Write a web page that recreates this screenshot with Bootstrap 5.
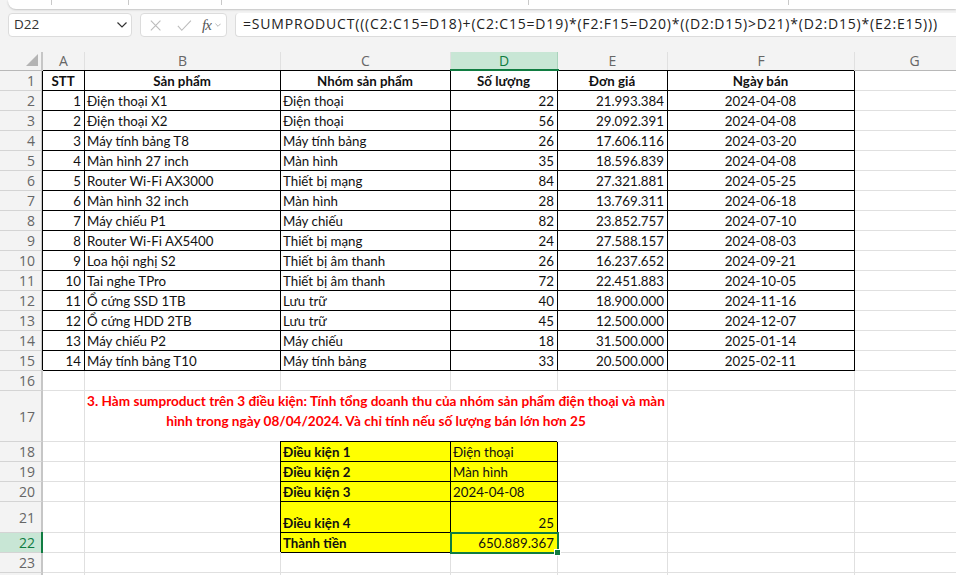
<!doctype html>
<html lang="vi"><head><meta charset="utf-8"><title>Excel</title>
<link href="https://cdn.jsdelivr.net/npm/bootstrap@5.3.0/dist/css/bootstrap.min.css" rel="stylesheet">
<style>
html,body{height:575px;overflow:hidden;background:#f3f3f3}
body{font-family:"Open Sans","Noto Sans",sans-serif}
.rib{height:9px;margin-left:8px;background:#fff;border-bottom-left-radius:8px;box-shadow:0 1px 2px #c4c4c4}
.rib i{display:block;height:5px;border-right:1px solid #c9c9c9}
.fbar{height:43px;padding-top:4px}
.namebox,.fnbox,.fxbox{height:24px;background:#fff;border:1px solid #dcdcdc}
.namebox{width:124px;margin-left:8px;border-radius:4px;padding:0 4px 1px 5px;font-size:13.5px;color:#333}
.fnbox{width:87px;margin-left:8px;border-radius:4px;padding:0 5px}
.fnbox em{font:italic 15px "Liberation Serif",serif;color:#555;letter-spacing:-1px;margin-left:10px}
.fxbox{flex:1;margin-left:8px;border-right:0;border-top:0;border-top-left-radius:4px;border-bottom-left-radius:4px;padding:0 0 2px 7px;font:14px "Open Sans",sans-serif;letter-spacing:.81px;color:#222;white-space:nowrap;overflow:hidden}
.sheetwrap{overflow:hidden;height:523px;margin-top:0}
.xl{table-layout:fixed;width:975px;border-collapse:separate;border-spacing:0;background:#fff;font:13.3px/18px Lato,"Open Sans",sans-serif;color:#111}
.xl td{height:20px;padding:0 3px 0 2px;vertical-align:bottom;white-space:nowrap;overflow:visible;border-right:1px solid #e0e0e0;border-bottom:1px solid #e0e0e0}
.xl thead th{height:19px;background:#f3f3f3;color:#666;font:400 14px/18px "Open Sans",sans-serif;text-align:center;border-right:1px solid #e0e0e0;border-bottom:1px solid #b8b8b8;padding:0;vertical-align:bottom}
.xl tbody th{background:#f3f3f3;color:#666;font:400 14px/19px "Open Sans",sans-serif;text-align:right;padding:0 6px 0 0;border-right:2px solid #c6c6c6;border-bottom:1px solid #d4d4d4;vertical-align:middle}
.xl td.kk{border-right-color:#000;border-bottom-color:#000;box-shadow:-1px -1px 0 #000}
.xl td.yy{background:#ff0}
.xl thead th.corner{position:relative;border-right:2px solid #c6c6c6}
.corner svg{position:absolute;right:3px;bottom:4px}
.corner::before{content:"";position:absolute;right:-2px;top:-11px;height:11px;width:2px;background:#c6c6c6}
.xl thead th.hicol{background:#c8e6d5;color:#107c41;position:relative;z-index:2;border-right-color:#a9d3bc}
.hicol::after{content:"";position:absolute;left:-1px;right:-2px;bottom:-1px;height:2px;background:#107c41}
.xl tbody th.hirow{background:#c8e6d5;color:#107c41;position:relative;z-index:2;border-right-color:#c8e6d5}
.hirow::after{content:"";position:absolute;right:-2px;top:-1px;bottom:-1px;width:2px;background:#107c41}
.r17 td{height:51px;vertical-align:middle}
.r21 td{height:31px}
.xl td.title{white-space:normal;text-align:center;color:#f00;font-weight:700;font-size:13.6px;line-height:20px;padding:0 0 10px}
.xl td.sel{position:relative;z-index:3}
.sel::after{content:"";position:absolute;left:-1px;top:-1px;right:-2px;bottom:-2px;border:2px solid #107c41}
.sel::before{content:"";position:absolute;z-index:1;right:-3px;bottom:-3px;width:5px;height:5px;background:#107c41;outline:1px solid #fff}
.sel span{position:relative}
</style></head><body>
<div class="rib d-flex"><i style="width:44px"></i><i style="width:77px"></i><i style="width:93px"></i><i style="width:307px"></i><i style="width:260px"></i></div>
<div class="fbar d-flex align-items-start">
<div class="namebox d-flex align-items-center justify-content-between"><span>D22</span><svg width="10" height="6" viewBox="0 0 10 6"><path d="M.5.5 5 5 9.500.5" fill="none" stroke="#333" stroke-width="1.200"/></svg></div>
<div class="fnbox d-flex align-items-center"><svg class="ms-1" width="13" height="13" viewBox="0 0 13 13"><path d="M1 1l11 11M12 1 1 12" stroke="#bcbcbc" stroke-width="1.300"/></svg><svg class="ms-3" width="17" height="13" viewBox="0 0 17 13"><path d="M1 7l4.500 5L16 1" fill="none" stroke="#bcbcbc" stroke-width="1.300"/></svg><em>fx</em><svg class="ms-1" width="7" height="4" viewBox="0 0 7 4"><path d="M.5.5 3.500 3.500 6.500.5" fill="none" stroke="#aaa"/></svg></div>
<div class="fxbox d-flex align-items-center">=SUMPRODUCT(((C2:C15=D18)+(C2:C15=D19)*(F2:F15=D20)*((D2:D15)&gt;D21)*(D2:D15)*(E2:E15)))</div>
</div>
<div class="sheetwrap">
<table class="xl">
<colgroup><col style="width:43px"><col style="width:42px"><col style="width:196px"><col style="width:170px"><col style="width:107px"><col style="width:110px"><col style="width:187px"><col style="width:120px"></colgroup>
<thead><tr><th class="corner"><svg width="12" height="12" viewBox="0 0 12 12"><path d="M12 0v12H0z" fill="#b4b4b4"/></svg></th><th>A</th><th>B</th><th>C</th><th class="hicol">D</th><th>E</th><th>F</th><th>G</th></tr></thead>
<tbody>
<tr><th>1</th><td class="kk fw-bold text-center">STT</td><td class="kk fw-bold text-center">Sản phẩm</td><td class="kk fw-bold text-center">Nhóm sản phẩm</td><td class="kk fw-bold text-center">Số lượng</td><td class="kk fw-bold text-center">Đơn giá</td><td class="kk fw-bold text-center">Ngày bán</td><td></td></tr>
<tr><th>2</th><td class="kk text-end">1</td><td class="kk">Điện thoại X1</td><td class="kk">Điện thoại</td><td class="kk text-end">22</td><td class="kk text-end">21.993.384</td><td class="kk text-center">2024-04-08</td><td></td></tr>
<tr><th>3</th><td class="kk text-end">2</td><td class="kk">Điện thoại X2</td><td class="kk">Điện thoại</td><td class="kk text-end">56</td><td class="kk text-end">29.092.391</td><td class="kk text-center">2024-04-08</td><td></td></tr>
<tr><th>4</th><td class="kk text-end">3</td><td class="kk">Máy tính bảng T8</td><td class="kk">Máy tính bảng</td><td class="kk text-end">26</td><td class="kk text-end">17.606.116</td><td class="kk text-center">2024-03-20</td><td></td></tr>
<tr><th>5</th><td class="kk text-end">4</td><td class="kk">Màn hình 27 inch</td><td class="kk">Màn hình</td><td class="kk text-end">35</td><td class="kk text-end">18.596.839</td><td class="kk text-center">2024-04-08</td><td></td></tr>
<tr><th>6</th><td class="kk text-end">5</td><td class="kk">Router Wi-Fi AX3000</td><td class="kk">Thiết bị mạng</td><td class="kk text-end">84</td><td class="kk text-end">27.321.881</td><td class="kk text-center">2024-05-25</td><td></td></tr>
<tr><th>7</th><td class="kk text-end">6</td><td class="kk">Màn hình 32 inch</td><td class="kk">Màn hình</td><td class="kk text-end">28</td><td class="kk text-end">13.769.311</td><td class="kk text-center">2024-06-18</td><td></td></tr>
<tr><th>8</th><td class="kk text-end">7</td><td class="kk">Máy chiếu P1</td><td class="kk">Máy chiếu</td><td class="kk text-end">82</td><td class="kk text-end">23.852.757</td><td class="kk text-center">2024-07-10</td><td></td></tr>
<tr><th>9</th><td class="kk text-end">8</td><td class="kk">Router Wi-Fi AX5400</td><td class="kk">Thiết bị mạng</td><td class="kk text-end">24</td><td class="kk text-end">27.588.157</td><td class="kk text-center">2024-08-03</td><td></td></tr>
<tr><th>10</th><td class="kk text-end">9</td><td class="kk">Loa hội nghị S2</td><td class="kk">Thiết bị âm thanh</td><td class="kk text-end">26</td><td class="kk text-end">16.237.652</td><td class="kk text-center">2024-09-21</td><td></td></tr>
<tr><th>11</th><td class="kk text-end">10</td><td class="kk">Tai nghe TPro</td><td class="kk">Thiết bị âm thanh</td><td class="kk text-end">72</td><td class="kk text-end">22.451.883</td><td class="kk text-center">2024-10-05</td><td></td></tr>
<tr><th>12</th><td class="kk text-end">11</td><td class="kk">Ổ cứng SSD 1TB</td><td class="kk">Lưu trữ</td><td class="kk text-end">40</td><td class="kk text-end">18.900.000</td><td class="kk text-center">2024-11-16</td><td></td></tr>
<tr><th>13</th><td class="kk text-end">12</td><td class="kk">Ổ cứng HDD 2TB</td><td class="kk">Lưu trữ</td><td class="kk text-end">45</td><td class="kk text-end">12.500.000</td><td class="kk text-center">2024-12-07</td><td></td></tr>
<tr><th>14</th><td class="kk text-end">13</td><td class="kk">Máy chiếu P2</td><td class="kk">Máy chiếu</td><td class="kk text-end">18</td><td class="kk text-end">31.500.000</td><td class="kk text-center">2025-01-14</td><td></td></tr>
<tr><th>15</th><td class="kk text-end">14</td><td class="kk">Máy tính bảng T10</td><td class="kk">Máy tính bảng</td><td class="kk text-end">33</td><td class="kk text-end">20.500.000</td><td class="kk text-center">2025-02-11</td><td></td></tr>
<tr><th>16</th><td></td><td></td><td></td><td></td><td></td><td></td><td></td></tr>
<tr class="r17"><th>17</th><td></td><td colspan="4" class="title">3. Hàm sumproduct trên 3 điều kiện: Tính tổng doanh thu của nhóm sản phẩm điện thoại và màn hình trong ngày 08/04/2024. Và chỉ tính nếu số lượng bán lớn hơn 25</td><td></td><td></td></tr>
<tr><th>18</th><td></td><td></td><td class="kk yy fw-bold">Điều kiện 1</td><td class="kk yy">Điện thoại</td><td></td><td></td><td></td></tr>
<tr><th>19</th><td></td><td></td><td class="kk yy fw-bold">Điều kiện 2</td><td class="kk yy">Màn hình</td><td></td><td></td><td></td></tr>
<tr><th>20</th><td></td><td></td><td class="kk yy fw-bold">Điều kiện 3</td><td class="kk yy">2024-04-08</td><td></td><td></td><td></td></tr>
<tr class="r21"><th>21</th><td></td><td></td><td class="kk yy fw-bold">Điều kiện 4</td><td class="kk yy text-end">25</td><td></td><td></td><td></td></tr>
<tr><th class="hirow">22</th><td></td><td></td><td class="kk yy fw-bold">Thành tiền</td><td class="kk yy text-end sel"><span>650.889.367</span></td><td></td><td></td><td></td></tr>
<tr><th>23</th><td></td><td></td><td></td><td></td><td></td><td></td><td></td></tr>
<tr><th></th><td></td><td></td><td></td><td></td><td></td><td></td><td></td></tr>
</tbody></table>
</div>
</body></html>
